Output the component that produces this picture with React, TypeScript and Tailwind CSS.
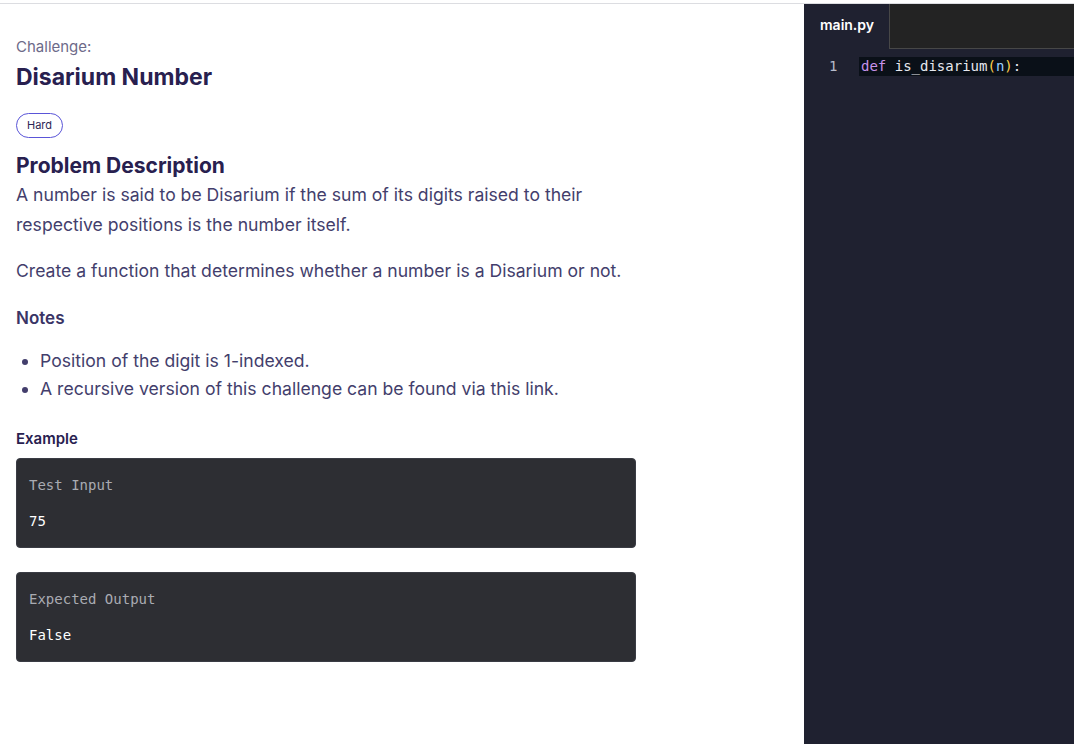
import React from 'react';

const sans = { fontFamily: 'Inter, "Noto Sans", sans-serif' };
const mono = { fontFamily: '"DejaVu Sans Mono", "Liberation Mono", monospace' };

function ExampleBox({ label, value }: { label: string; value: string }) {
  return (
    <div className="w-[620px] h-[90px] rounded-[4px] bg-[#2d2e33] border border-[#3a3c44] px-3 pt-[17px] text-[14px]" style={mono}>
      <div className="text-[#a9abb2] leading-[18px]">{label}</div>
      <div className="text-white leading-[18px] mt-[18px]">{value}</div>
    </div>
  );
}

export default function App() {
  return (
    <div className="w-[1074px] h-[744px] overflow-hidden bg-white flex flex-col" style={sans}>
      <div className="h-[4px] shrink-0 border-b border-[#dcdde1]" />
      <div className="flex flex-1 min-h-0">
        {/* challenge description */}
        <div className="w-[804px] shrink-0 pl-[16px] pt-[33px]">
          <div className="text-[15px] leading-[20px] text-[#6d6a89]">Challenge:</div>
          <h1 className="text-[23px] leading-[30px] font-bold text-[#28204f] mt-[5px]">Disarium Number</h1>
          <div className="mt-[21px] inline-flex items-center h-[25px] px-[10px] rounded-full border border-[#5a55d8] text-[11px] text-[#2d2755]">Hard</div>
          <h2 className="text-[21px] leading-[28px] font-bold text-[#28204f] mt-[14px]">Problem Description</h2>
          <p className="text-[17.6px] leading-[30px] text-[#433e6c] w-[640px]">
            A number is said to be Disarium if the sum of its digits raised to their respective positions is the number itself.
          </p>
          <p className="text-[17.6px] leading-[30px] text-[#433e6c] mt-[16px]">
            Create a function that determines whether a number is a Disarium or not.
          </p>
          <h3 className="text-[17px] leading-[24px] font-semibold text-[#3a3466] mt-[20px]">Notes</h3>
          <ul className="mt-[17px] ml-[24px] list-disc text-[17.6px] leading-[28px] text-[#433e6c]">
            <li>Position of the digit is 1-indexed.</li>
            <li>A recursive version of this challenge can be found via this link.</li>
          </ul>
          <h3 className="text-[15px] leading-[20px] font-semibold text-[#28204f] mt-[26px]">Example</h3>
          <div className="mt-[9px] flex flex-col gap-[24px]">
            <ExampleBox label="Test Input" value="75" />
            <ExampleBox label="Expected Output" value="False" />
          </div>
        </div>

        {/* editor */}
        <div className="flex-1 bg-[#1f2130] flex flex-col">
          <div className="flex h-[45px] shrink-0">
            <div className="w-[85px] flex items-center pl-[16px] pb-[4px] text-[14px] font-semibold text-white">main.py</div>
            <div className="flex-1 bg-[#232323] border-l border-b border-[#474747]" />
          </div>
          <div className="flex items-center mt-[8px] h-[19px] text-[14px] leading-[19px]" style={mono}>
            <div className="w-[55px] pl-[25px] text-[#b7bccb]">1</div>
            <div className="flex-1 h-full bg-[#0a1018] pl-[2px] whitespace-pre">
              <span className="text-[#c792ea]">def</span>
              <span className="text-[#e6e8ef]"> is_disarium</span>
              <span className="text-[#ffd24a]">(</span>
              <span className="text-[#9ccfff]">n</span>
              <span className="text-[#ffd24a]">)</span>
              <span className="text-[#e6e8ef]">:</span>
            </div>
          </div>
        </div>
      </div>
    </div>
  );
}
